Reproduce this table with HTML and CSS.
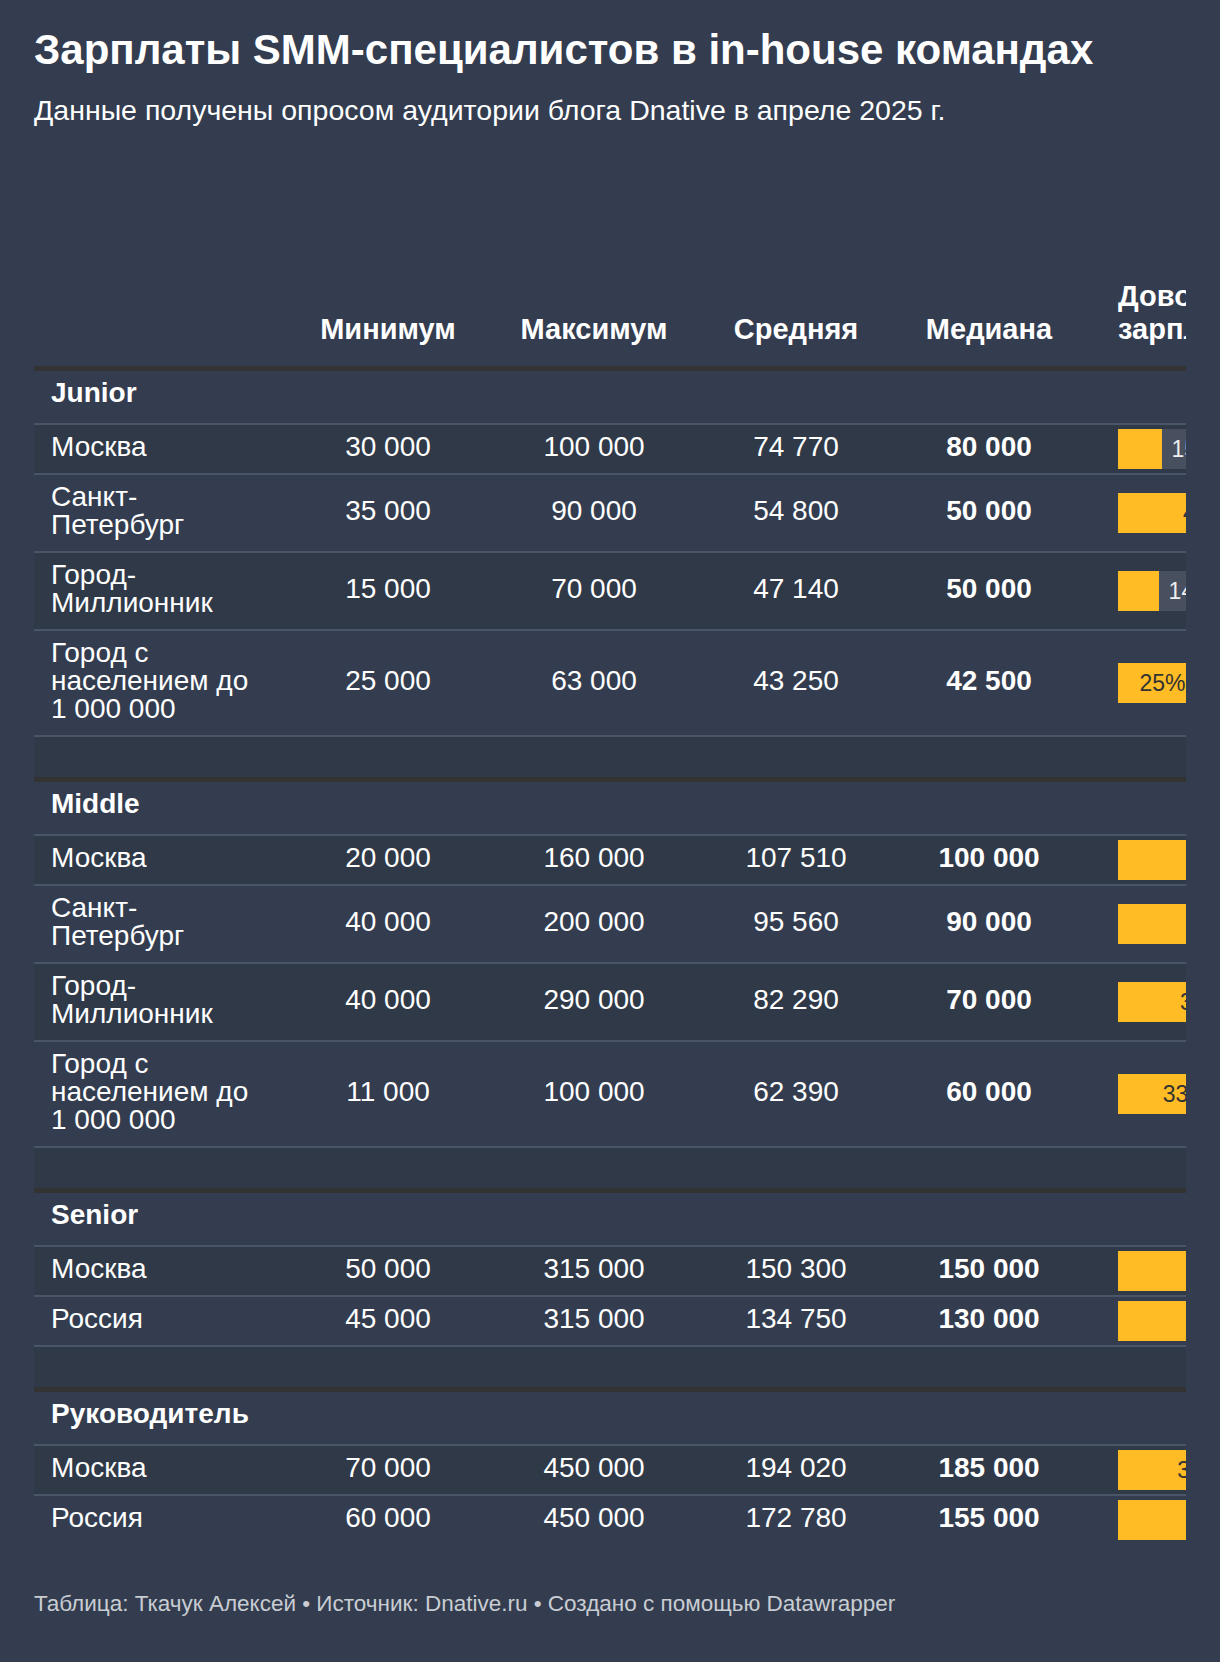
FILE: index.html
```html
<!DOCTYPE html>
<html lang="ru">
<head>
<meta charset="utf-8">
<title>Зарплаты SMM-специалистов</title>
<link rel="stylesheet" href="styles.css">
</head>
<body>
<div class="chart">
  <h1 class="title">Зарплаты SMM-специалистов в in-house командах</h1>
  <p class="subtitle">Данные получены опросом аудитории блога Dnative в апреле 2025 г.</p>
  <div class="table-wrap">
    <table class="tbl">
      <colgroup>
        <col class="c-name"><col class="c-min"><col class="c-max"><col class="c-avg"><col class="c-med"><col class="c-bar">
      </colgroup>
      <thead>
        <tr>
          <th></th>
          <th class="num">Минимум</th>
          <th class="num">Максимум</th>
          <th class="num">Средняя</th>
          <th class="num">Медиана</th>
          <th class="th-bar">Довольны<br>зарплатой</th>
        </tr>
      </thead>
      <tbody>
        <tr class="group"><td colspan="6">Junior</td></tr>
        <tr class="dark"><td class="name">Москва</td><td class="num">30 000</td><td class="num">100 000</td><td class="num">74 770</td><td class="num med">80 000</td><td class="barcell"><div class="track"><div class="bar" style="width:15%"></div><span class="lbl out">15%</span></div></td></tr>
        <tr><td class="name">Санкт-Петербург</td><td class="num">35 000</td><td class="num">90 000</td><td class="num">54 800</td><td class="num med">50 000</td><td class="barcell"><div class="track"><div class="bar" style="width:40%"><span class="lbl in">40%</span></div></div></td></tr>
        <tr class="dark"><td class="name">Город-Миллионник</td><td class="num">15 000</td><td class="num">70 000</td><td class="num">47 140</td><td class="num med">50 000</td><td class="barcell"><div class="track"><div class="bar" style="width:14%"></div><span class="lbl out">14%</span></div></td></tr>
        <tr><td class="name">Город с населением до 1&nbsp;000&nbsp;000</td><td class="num">25 000</td><td class="num">63 000</td><td class="num">43 250</td><td class="num med">42 500</td><td class="barcell"><div class="track"><div class="bar" style="width:25%"><span class="lbl in">25%</span></div></div></td></tr>
        <tr class="spacer dark"><td colspan="6"></td></tr>

        <tr class="group"><td colspan="6">Middle</td></tr>
        <tr class="dark"><td class="name">Москва</td><td class="num">20 000</td><td class="num">160 000</td><td class="num">107 510</td><td class="num med">100 000</td><td class="barcell"><div class="track"><div class="bar" style="width:47%"><span class="lbl in">47%</span></div></div></td></tr>
        <tr><td class="name">Санкт-Петербург</td><td class="num">40 000</td><td class="num">200 000</td><td class="num">95 560</td><td class="num med">90 000</td><td class="barcell"><div class="track"><div class="bar" style="width:45%"><span class="lbl in">45%</span></div></div></td></tr>
        <tr class="dark"><td class="name">Город-Миллионник</td><td class="num">40 000</td><td class="num">290 000</td><td class="num">82 290</td><td class="num med">70 000</td><td class="barcell"><div class="track"><div class="bar" style="width:39%"><span class="lbl in">39%</span></div></div></td></tr>
        <tr><td class="name">Город с населением до 1&nbsp;000&nbsp;000</td><td class="num">11 000</td><td class="num">100 000</td><td class="num">62 390</td><td class="num med">60 000</td><td class="barcell"><div class="track"><div class="bar" style="width:33%"><span class="lbl in">33%</span></div></div></td></tr>
        <tr class="spacer dark"><td colspan="6"></td></tr>

        <tr class="group"><td colspan="6">Senior</td></tr>
        <tr class="dark"><td class="name">Москва</td><td class="num">50 000</td><td class="num">315 000</td><td class="num">150 300</td><td class="num med">150 000</td><td class="barcell"><div class="track"><div class="bar" style="width:50%"><span class="lbl in">50%</span></div></div></td></tr>
        <tr><td class="name">Россия</td><td class="num">45 000</td><td class="num">315 000</td><td class="num">134 750</td><td class="num med">130 000</td><td class="barcell"><div class="track"><div class="bar" style="width:48%"><span class="lbl in">48%</span></div></div></td></tr>
        <tr class="spacer dark"><td colspan="6"></td></tr>

        <tr class="group"><td colspan="6">Руководитель</td></tr>
        <tr class="dark"><td class="name">Москва</td><td class="num">70 000</td><td class="num">450 000</td><td class="num">194 020</td><td class="num med">185 000</td><td class="barcell"><div class="track"><div class="bar" style="width:38%"><span class="lbl in">38%</span></div></div></td></tr>
        <tr class="last"><td class="name">Россия</td><td class="num">60 000</td><td class="num">450 000</td><td class="num">172 780</td><td class="num med">155 000</td><td class="barcell"><div class="track"><div class="bar" style="width:46%"><span class="lbl in">46%</span></div></div></td></tr>
      </tbody>
    </table>
  </div>
  <p class="footer">Таблица: Ткачук Алексей • Источник: Dnative.ru • Создано с помощью Datawrapper</p>
</div>
</body>
</html>
```

FILE: styles.css
```css
html, body {
  margin: 0;
  padding: 0;
  background: #333d4f;
}

.chart {
  padding: 27px 34px 0 34px;
  font-family: "Liberation Sans", Arial, sans-serif;
  color: #ffffff;
}

.title {
  margin: 0;
  font-size: 42px;
  line-height: 46px;
  font-weight: 700;
}

.subtitle {
  margin: 21px 0 0 0;
  font-size: 28.5px;
  line-height: 32px;
  font-weight: 400;
}

.table-wrap {
  margin-top: 154px;
  width: 1152px;
  overflow: hidden;
}

.tbl {
  table-layout: fixed;
  border-collapse: collapse;
  width: 1414px;
}

.c-name { width: 256px; }
.c-min { width: 196px; }
.c-max { width: 216px; }
.c-avg { width: 188px; }
.c-med { width: 198px; }
.c-bar { width: 360px; }

.tbl th {
  font-size: 29px;
  line-height: 33px;
  font-weight: 700;
  vertical-align: bottom;
  padding: 0 0 20px 0;
  text-align: center;
}

.tbl th.th-bar {
  text-align: left;
  padding-left: 30px;
}

.tbl td {
  font-size: 28px;
  line-height: 28px;
  padding: 8px 0 12px 0;
  vertical-align: middle;
  border-bottom: 2px solid #4a5567;
}

.tbl td.name {
  padding-left: 17px;
  padding-right: 30px;
  text-align: left;
}

.tbl td.num {
  text-align: center;
}

.tbl td.med {
  font-weight: 700;
}

.tbl tr.dark td {
  background: #2f3948;
}

.tbl tr.group td {
  border-top: 5px solid #333333;
  font-size: 28px;
  font-weight: 700;
  line-height: 30px;
  padding: 7px 0 15px 17px;
}

.tbl tr.spacer td {
  height: 40px;
  padding: 0;
  border-bottom: none;
}

.tbl tr.last td {
  border-bottom: none;
}

.tbl td.barcell {
  padding: 4px 0 4px 30px;
}

.track {
  display: flex;
  align-items: center;
  width: 290px;
  height: 40px;
  background: #485060;
}

.bar {
  height: 40px;
  background: #ffbc24;
  display: flex;
  align-items: center;
  justify-content: flex-end;
}

.lbl {
  font-size: 23px;
  line-height: 24px;
  white-space: nowrap;
}

.lbl.in {
  color: #333333;
  padding-right: 5px;
}

.lbl.out {
  color: #eeeeee;
  padding-left: 10px;
}

.footer {
  margin: 47px 0 0 0;
  padding-bottom: 30px;
  font-size: 22.5px;
  line-height: 26px;
  color: #c9cdd3;
}
```
